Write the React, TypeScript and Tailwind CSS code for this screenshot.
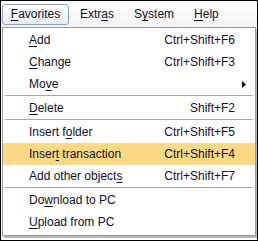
const font = { fontFamily: '"Liberation Sans", Arial, sans-serif' };

type Item = { label: React.ReactNode; shortcut?: string; sub?: boolean; active?: boolean };

const U = ({ children }: { children: React.ReactNode }) => <span className="underline underline-offset-2">{children}</span>;

const groups: Item[][] = [
  [
    { label: <><U>A</U>dd</>, shortcut: "Ctrl+Shift+F6" },
    { label: <><U>C</U>hange</>, shortcut: "Ctrl+Shift+F3" },
    { label: <>Mo<U>v</U>e</>, sub: true },
  ],
  [{ label: <><U>D</U>elete</>, shortcut: "Shift+F2" }],
  [
    { label: <>Insert f<U>o</U>lder</>, shortcut: "Ctrl+Shift+F5" },
    { label: <>Inser<U>t</U> transaction</>, shortcut: "Ctrl+Shift+F4", active: true },
    { label: <>Add other object<U>s</U></>, shortcut: "Ctrl+Shift+F7" },
  ],
  [
    { label: <>Do<U>w</U>nload to PC</> },
    { label: <><U>U</U>pload from PC</> },
  ],
];

function Row({ item }: { item: Item }) {
  return (
    <div className={`flex h-[22px] items-center pl-[26px] pr-[20px] ${item.active ? "bg-[#fbd985]" : ""}`}>
      <span className="flex-1">{item.label}</span>
      {item.shortcut && <span>{item.shortcut}</span>}
      {item.sub && (
        <svg width="4" height="7" viewBox="0 0 4 7" className="mr-[-11px]">
          <path d="M0 0 L4 3.5 L0 7 Z" fill="#000" />
        </svg>
      )}
    </div>
  );
}

export default function App() {
  return (
    <div className="w-[258px] h-[241px] border border-black bg-white text-[12px] text-[#10102a] overflow-hidden" style={font}>
      <div className="flex h-[26px] items-center bg-gradient-to-b from-white to-[#f3f3f3] pl-[1px]">
        <div className="flex h-[21px] w-[67px] items-center justify-center rounded-[3px] border border-[#8d9fbf] bg-gradient-to-b from-white to-[#e8ecf2]">
          <span><U>F</U>avorites</span>
        </div>
        <span className="ml-[11px]">Extr<U>a</U>s</span>
        <span className="ml-[20px]">S<U>y</U>stem</span>
        <span className="ml-[20px]"><U>H</U>elp</span>
      </div>
      <div className="ml-[1px] mr-[1px] h-[209px] border border-[#9a9a9a] bg-white pt-px shadow-[2px_2px_0_#b8b8b8]">
        {groups.map((g, gi) => (
          <div key={gi}>
            {gi > 0 && <div className="mx-[2px] mb-px h-px bg-[#a8a8a8]" />}
            {g.map((it, i) => (
              <Row key={i} item={it} />
            ))}
          </div>
        ))}
      </div>
    </div>
  );
}
